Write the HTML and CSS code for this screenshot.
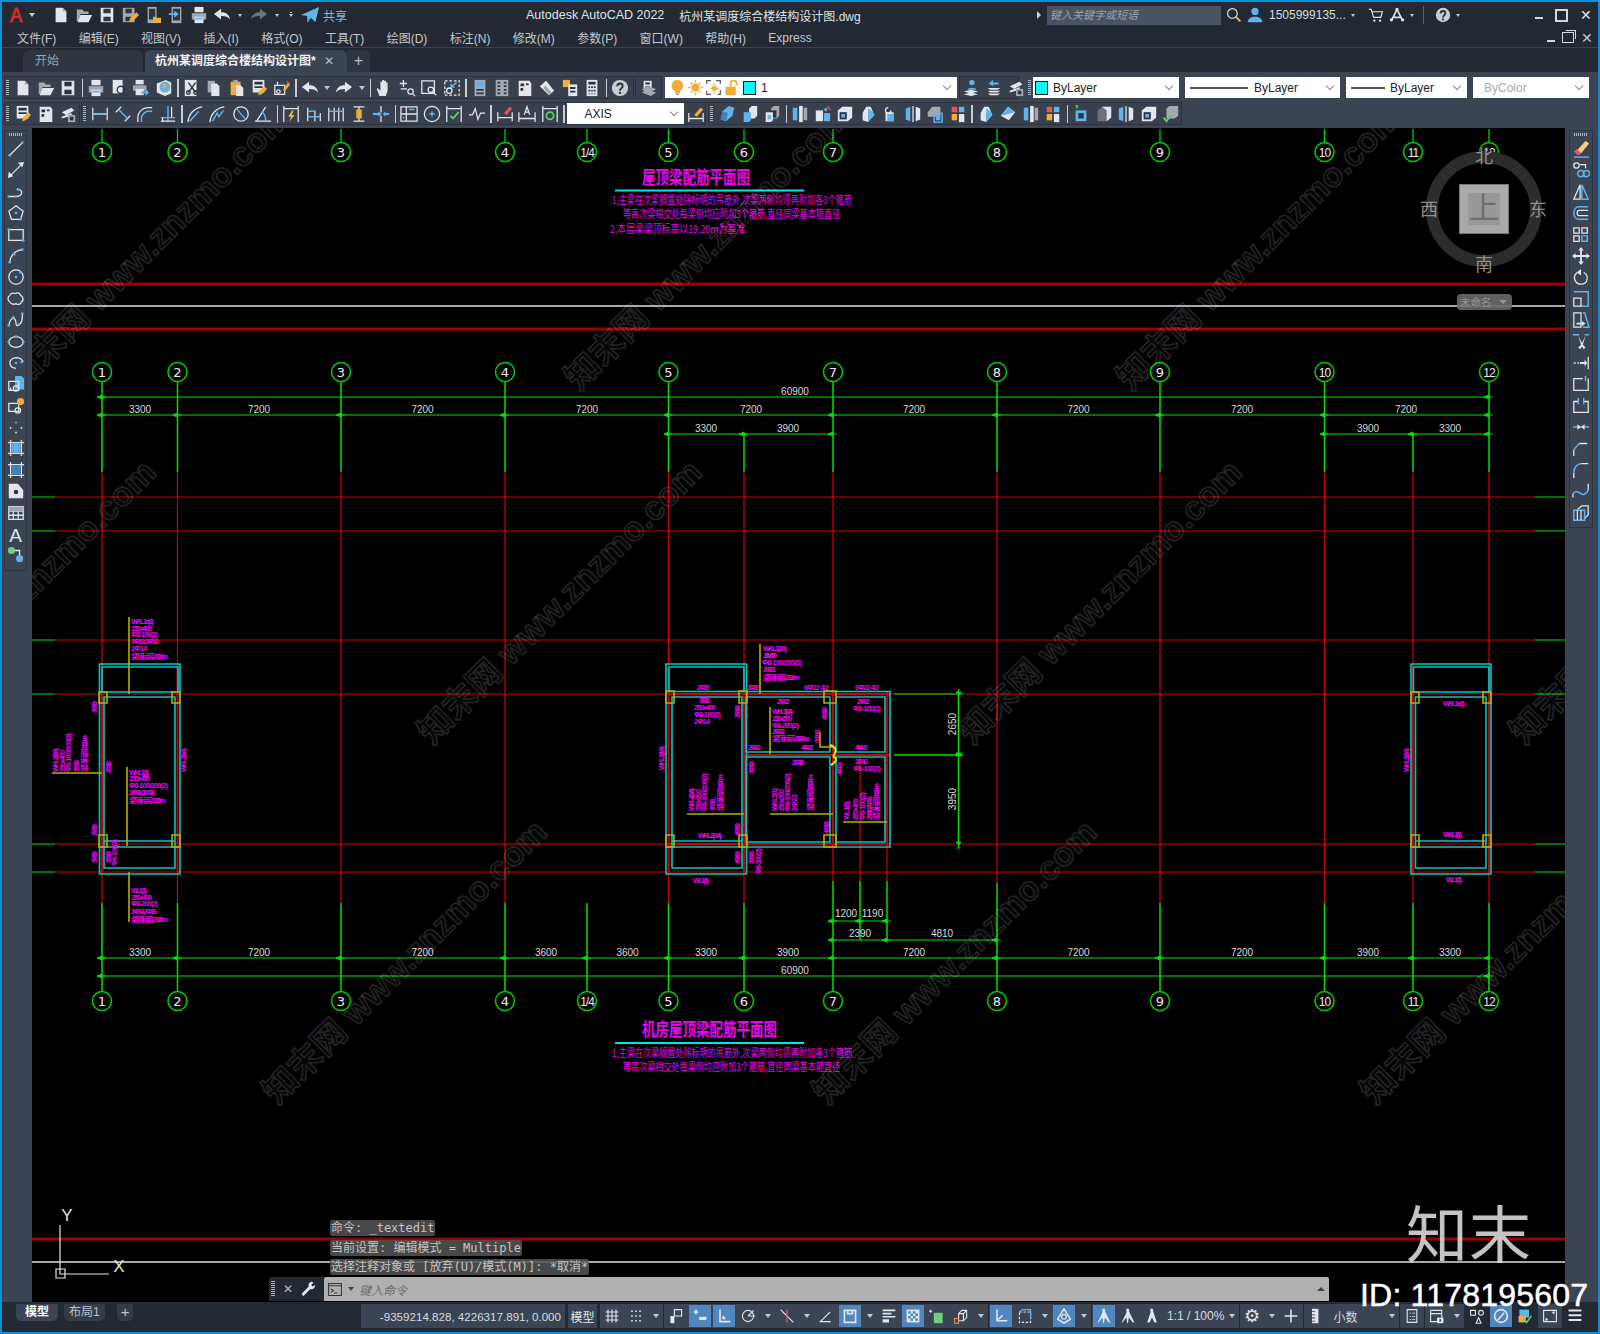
FILE: index.html
```html
<!DOCTYPE html>
<html lang="zh">
<head>
<meta charset="utf-8">
<title>Autodesk AutoCAD 2022</title>
<link rel="stylesheet" href="styles.css">
</head>
<body>
<svg class="sprite" aria-hidden="true">
<defs>
<symbol id="logo" viewBox="0 0 20 20"><path class="lg" d="M1 20L8 0h4l7 20h-4l-2-6H7l-2 6zM8 11h4l-2-6z"/></symbol>
<symbol id="new" viewBox="0 0 20 20"><path class="w" d="M4 2h8l4 4v12H4z"/><path class="g1" d="M12 2l4 4h-4z"/></symbol>
<symbol id="open" viewBox="0 0 20 20"><path class="g1" d="M2 4h6l2 2h5v3H6l-2 8H2z"/><path class="w" d="M6 10h13l-4 8H3z"/></symbol>
<symbol id="save" viewBox="0 0 20 20"><path class="w" d="M3 2h14v16H3z"/><path class="dk" d="M6 3h8v5H6zM6 12h8v5H6z"/></symbol>
<symbol id="saveas" viewBox="0 0 20 20"><path class="g1" d="M2 2h13v16H2z"/><path class="dk" d="M5 3h7v5H5zM5 12h7v5H5z"/><path class="o" d="M9 18l1-4 7-7 3 3-7 7z"/></symbol>
<symbol id="pub" viewBox="0 0 20 20"><path class="g1" d="M4 1h10v18H4z"/><path class="dk" d="M5.500 3h7v12h-7z"/><path class="o" d="M10 12h3l1 1h5v6h-9z"/></symbol>
<symbol id="mob" viewBox="0 0 20 20"><path class="g1" d="M5 1h11v18H5z"/><path class="dk" d="M6.500 3h8v13h-8z"/><path class="bl" d="M2 8h6V5l5 4-5 4v-3H2z"/></symbol>
<symbol id="print" viewBox="0 0 20 20"><path class="w" d="M5 1h10v6H5z"/><path class="g1" d="M2 8h16v7H2z"/><path class="w" d="M5 12h10v7H5z"/><path class="bl" d="M6 13h8v2H6z"/></symbol>
<symbol id="prev" viewBox="0 0 20 20"><path class="w" d="M3 1h11v15H3z"/><circle class="dkl" cx="12" cy="12" r="4"/><path class="dkl" d="M15 15l4 4"/></symbol>
<symbol id="plot" viewBox="0 0 20 20"><path class="w" d="M4 1h9v5H4z"/><path class="g1" d="M1 7h15v6H1z"/><path class="w" d="M4 11h9v7H4z"/><path class="bl" d="M10 14h5v-3l4 4-4 4v-3h-5z"/></symbol>
<symbol id="globe" viewBox="0 0 20 20"><path class="w" d="M2 5l10-4 6 3v12l-7 3-9-4z"/><circle class="bl" cx="11" cy="9" r="6"/><path class="o" d="M8 6l4-1 1 3-3 3z"/></symbol>
<symbol id="cut" viewBox="0 0 20 20"><path class="w" d="M2 1h13v18H2z"/><path class="dkl" d="M6 4l8 11M14 4L6 15"/><circle class="dkl" cx="6" cy="15" r="2"/><circle class="dkl" cx="14" cy="15" r="2"/></symbol>
<symbol id="copy" viewBox="0 0 20 20"><path class="g1" d="M3 2h8v13H3z"/><path class="w" d="M7 5h6l3 3v11H7z"/></symbol>
<symbol id="paste" viewBox="0 0 20 20"><path class="o" d="M3 3h11v15H3z"/><path class="g1" d="M6 1h5v4H6z"/><path class="w" d="M9 7h5l3 3v9H9z"/></symbol>
<symbol id="blk" viewBox="0 0 20 20"><path class="w" d="M3 1h13v14H3z"/><path class="dk" d="M5 3h9v3H5zM5 8h9v2H5z"/><path class="o" d="M9 18l1-4 6-6 3 3-6 6z"/></symbol>
<symbol id="match" viewBox="0 0 20 20"><path class="l" d="M2 7h11v10H2zM5 3v4"/><circle class="l" cx="6" cy="14" r="2"/><path class="o" d="M11 12l6-8 2 2-6 8z"/><path class="rd" d="M16 2l3 3-1 1-3-3z"/></symbol>
<symbol id="undo" viewBox="0 0 20 20"><path class="w" d="M1 9l8-6v4c6 0 9 3 10 8-2-3-5-4-10-4v4z"/></symbol>
<symbol id="redo" viewBox="0 0 20 20"><path class="w" d="M19 9l-8-6v4C5 7 2 10 1 15c2-3 5-4 10-4v4z"/></symbol>
<symbol id="redog" viewBox="0 0 20 20"><path class="g2" d="M19 9l-8-6v4C5 7 2 10 1 15c2-3 5-4 10-4v4z"/></symbol>
<symbol id="share" viewBox="0 0 20 20"><path class="bl" d="M0 10L20 1l-4 17-5-5-4 6v-8zM8 11l8-7-6 9z"/></symbol>
<symbol id="hand" viewBox="0 0 20 20"><path class="w" d="M5 19l-3-8 1-1 3 3V3h2v7V1h2v9V2h2v8V4h2v9l-2 6z"/></symbol>
<symbol id="zrt" viewBox="0 0 20 20"><path class="l" d="M6 1v8M2 5h8M3 11h7"/><circle class="l" cx="14" cy="14" r="3"/><path class="l" d="M16 16l3 3"/></symbol>
<symbol id="zwin" viewBox="0 0 20 20"><path class="l" d="M2 2h14v14H2z"/><circle class="l" cx="12" cy="12" r="3"/><path class="l" d="M14 14l4 4"/></symbol>
<symbol id="zprev" viewBox="0 0 20 20"><path class="l dash" d="M2 2h16v16H2z"/><path class="lb" d="M15 4L9 9M9 5v4h4"/><circle class="l" cx="7" cy="13" r="3"/></symbol>
<symbol id="prop" viewBox="0 0 20 20"><path class="g1" d="M4 1h12v18H4z"/><path class="bl" d="M6 3h8v6H6z"/><path class="dk" d="M6 11h8v2H6zM6 15h8v2H6z"/></symbol>
<symbol id="tool" viewBox="0 0 20 20"><path class="g1" d="M3 1h14v18H3z"/><path class="dk" d="M5 3h3v2H5zM12 3h3v2h-3zM5 7h3v2H5zM12 7h3v2h-3zM5 11h3v2H5zM12 11h3v2h-3zM5 15h3v2H5zM12 15h3v2h-3z"/></symbol>
<symbol id="sheet" viewBox="0 0 20 20"><path class="w" d="M3 2h12l2 3v14H3z"/><path class="dk" d="M5 5h4v3H5zM5 10h3v3H5zM11 5h3v2h-3z"/></symbol>
<symbol id="mark" viewBox="0 0 20 20"><path class="w" d="M2 8l7-6 9 11-6 5z"/><path class="g1" d="M8 7l7 8-3 3-6-8z"/></symbol>
<symbol id="qcalc" viewBox="0 0 20 20"><path class="o" d="M2 1h8v8H2z"/><path class="w" d="M8 6h10v13H8z"/><path class="dk" d="M10 9h6v2h-6zM10 13h6v2h-6z"/></symbol>
<symbol id="calc" viewBox="0 0 20 20"><path class="w" d="M4 1h12v18H4z"/><path class="dk" d="M6 3h8v3H6zM6 8h2v2H6zM9 8h2v2H9zM12 8h2v2h-2zM6 12h2v2H6zM9 12h2v2H9zM12 12h2v2h-2zM6 16h2v1H6zM9 16h2v1H9zM12 16h2v1h-2z"/></symbol>
<symbol id="help" viewBox="0 0 20 20"><circle class="g3" cx="10" cy="10" r="9"/><path class="dkl2" d="M7 8c0-4 6-4 6 0 0 2-3 2-3 5"/><circle class="dk" cx="10" cy="15.500" r="1.300"/></symbol>
<symbol id="lay" viewBox="0 0 20 20"><path class="w" d="M4 2h9v11H4z"/><path class="dk" d="M6 4h5v2H6zM6 8h5v2H6z"/><path class="g1" d="M2 12l6-4 10 3-6 4zM2 15l6-3 10 3-6 4z"/></symbol>
<symbol id="lay1" viewBox="0 0 20 20"><circle class="bl" cx="11" cy="4" r="3"/><path class="bl" d="M6 12c0-3 10-3 10 0z"/><path class="w" d="M2 14l8-2 8 2-8 2zM2 17l8-2 8 2-8 2z"/></symbol>
<symbol id="lay2" viewBox="0 0 20 20"><path class="bl" d="M9 1L4 5l5 3V6h6V4H9z"/><path class="w" d="M3 10h14l-3 2H6zM3 13h14l-3 2H6zM3 16h14l-3 2H6z"/></symbol>
<symbol id="lay3" viewBox="0 0 20 20"><path class="w" d="M3 8l11-5 3 3-9 5zM3 13l11-4v3l-11 3z"/><path class="g1" d="M10 11h8v8h-8z"/><path class="dk" d="M12 13h4v4h-4z"/></symbol>
<symbol id="bulb" viewBox="0 0 20 20"><circle class="o" cx="10" cy="8" r="7"/><path class="o" d="M7 13h6v4H7z"/><path class="g1" d="M8 17h4v2H8z"/></symbol>
<symbol id="sun" viewBox="0 0 20 20"><circle class="o" cx="10" cy="10" r="5"/><path class="lo" d="M10 1v3M10 16v3M1 10h3M16 10h3M4 4l2 2M14 14l2 2M16 4l-2 2M6 14l-2 2"/></symbol>
<symbol id="vp" viewBox="0 0 20 20"><path class="l3" d="M2 6V2h5M13 2h5v4M18 13v5h-3M7 18H2v-4"/><circle class="o" cx="11" cy="11" r="3"/><path class="lo" d="M11 5v2M11 15v2M6 11h2M14 11h2"/></symbol>
<symbol id="lock" viewBox="0 0 20 20"><path class="o" d="M3 9h12v10H3z"/><path class="lo2" d="M9 9V5c0-4 7-4 7 0v3"/></symbol>
<symbol id="dl" viewBox="0 0 20 20"><path class="l" d="M2 3v14M18 3v14M2 10h16"/><path class="lb" d="M2 10h16"/></symbol>
<symbol id="dal" viewBox="0 0 20 20"><path class="l" d="M2 8l6-6M12 18l6-6"/><path class="lb" d="M5 5l10 10"/></symbol>
<symbol id="darc" viewBox="0 0 20 20"><path class="l" d="M2 19v-5C2 8 7 3 13 3h5"/><path class="lb" d="M6 19v-4c0-4 4-8 8-8h4"/></symbol>
<symbol id="dord" viewBox="0 0 20 20"><path class="lb" d="M10 1v18M2 14h16"/><path class="l" d="M14 2v12M2 18h16M4 14v5"/></symbol>
<symbol id="drad" viewBox="0 0 20 20"><path class="l" d="M1 19C2 10 8 3 17 2"/><path class="lb" d="M3 18L13 7"/></symbol>
<symbol id="djog" viewBox="0 0 20 20"><path class="l" d="M1 19C2 10 8 3 17 2"/><path class="lb" d="M4 18l5-9 2 4 5-7"/></symbol>
<symbol id="ddia" viewBox="0 0 20 20"><circle class="l" cx="10" cy="10" r="8"/><path class="lb" d="M5 4l10 12"/></symbol>
<symbol id="dang" viewBox="0 0 20 20"><path class="l" d="M1 18h18M3 18L13 2"/><path class="lb" d="M9 8c3 2 4 6 4 10"/></symbol>
<symbol id="qd" viewBox="0 0 20 20"><path class="l" d="M2 1v18M18 1v18M2 4h16"/><path class="o" d="M11 6l-4 7h3l-2 6 6-8h-3l2-5z"/></symbol>
<symbol id="dbase" viewBox="0 0 20 20"><path class="l" d="M3 3v15M11 6v12M17 9v9"/><path class="lb" d="M3 7h8M3 13h14"/></symbol>
<symbol id="dcont" viewBox="0 0 20 20"><path class="l" d="M2 3v15M8 3v15M13 3v15M18 3v15"/><path class="lb" d="M2 7h16"/></symbol>
<symbol id="dsp" viewBox="0 0 20 20"><path class="l" d="M4 2h12M4 18h12M10 2v16"/><path class="o" d="M7 5h6v10H7z"/></symbol>
<symbol id="dbr" viewBox="0 0 20 20"><path class="l" d="M10 1v7M10 12v7"/><path class="bl" d="M1 9h6v-2l4 3-4 3v-2H1zM19 9h-4v-2l-3 3 3 3v-2h4z"/></symbol>
<symbol id="tol" viewBox="0 0 20 20"><path class="l" d="M1 2h18v16H1zM7 2v16M1 10h18"/><path class="lb" d="M10 5h6M3 14h2"/></symbol>
<symbol id="cen" viewBox="0 0 20 20"><circle class="l" cx="10" cy="10" r="8.500"/><path class="lb" d="M10 7v6M7 10h6"/></symbol>
<symbol id="insp" viewBox="0 0 20 20"><path class="l" d="M2 1v18M18 1v18M2 4h16"/><path class="gk" d="M6 12l3 3 6-7"/></symbol>
<symbol id="jogl" viewBox="0 0 20 20"><path class="l" d="M1 11h4l3-7 3 12 3-7h5"/></symbol>
<symbol id="dedit" viewBox="0 0 20 20"><path class="l" d="M2 8v10M18 8v10M2 14h16"/><path class="rd" d="M9 9l6-7 3 2-6 7z"/></symbol>
<symbol id="dtxt" viewBox="0 0 20 20"><path class="l" d="M1 8v11M19 8v11M1 15h18"/><path class="l" d="M7 11l3-9 3 9M8 8h4"/></symbol>
<symbol id="dupd" viewBox="0 0 20 20"><path class="l" d="M2 1v18M18 1v18M2 4h16"/><circle class="gk" cx="10" cy="12" r="4"/></symbol>
<symbol id="dst" viewBox="0 0 20 20"><path class="l" d="M2 9v10M18 9v10M2 15h16"/><path class="o" d="M8 11l7-8 3 2-7 8z"/></symbol>
<symbol id="sw1" viewBox="0 0 20 20"><path class="bl" d="M3 16l2-9 7-6 6 2-2 9-7 6z"/><path class="bl2" d="M3 16l2-9 6 2-2 9z"/></symbol>
<symbol id="sw2" viewBox="0 0 20 20"><path class="w" d="M9 4l3-3h6v11l-3 3H9z"/><path class="bl" d="M3 8h8v9l-2 2H3z"/></symbol>
<symbol id="sw3" viewBox="0 0 20 20"><path class="g1" d="M9 4l3-3h6v11l-3 3H9z"/><path class="dk" d="M8 6h7v8H8z"/><path class="w" d="M3 8h8v9l-2 2H3z"/><path class="bl" d="M5 11h4v5H5z"/></symbol>
<symbol id="sw4" viewBox="0 0 20 20"><path class="bl" d="M2 3h5v14H2z"/><path class="w" d="M9 1h4v18H9z"/><path class="g1" d="M14 3h4v14h-4z"/></symbol>
<symbol id="sw5" viewBox="0 0 20 20"><path class="w" d="M5 5l5-3h7v11l-4 3H5z"/><path class="dk" d="M7 7h7v7H7z"/><path class="bl" d="M1 10h4V7l4 4-4 4v-2H1z"/></symbol>
<symbol id="sw6" viewBox="0 0 20 20"><path class="g1" d="M2 8l5-6h9v11H2z"/><path class="lb" d="M9 9h9v10H9z"/><path class="bl" d="M11 11h5v6h-5z"/></symbol>
<symbol id="sw7" viewBox="0 0 20 20"><path class="rd" d="M3 2h6v6H3z"/><path class="bl" d="M11 2h6v6h-6z"/><path class="o" d="M3 10h6v7H3z"/><path class="w" d="M11 10h6v9h-6z"/></symbol>
<symbol id="sw8" viewBox="0 0 20 20"><path class="w" d="M4 9l4-7h5l4 9-7 8-6-2z"/><path class="bl" d="M10 4c5 2 7 7 7 7l-7 8z"/></symbol>
<symbol id="sw9" viewBox="0 0 20 20"><path class="w" d="M2 12l8-10 8 6-7 9z"/><path class="bl" d="M2 12l8-10 8 6-8 2z"/></symbol>
<symbol id="sw10" viewBox="0 0 20 20"><path class="gk2" d="M4 1h3M5.500 0v4"/><path class="bl" d="M4 6h12v12H4z"/><path class="dk" d="M7 9h6v6H7z"/></symbol>
<symbol id="sw11" viewBox="0 0 20 20"><path class="g2" d="M3 6l5-4h10v12l-5 4H3z"/><path class="w" d="M8 2h10v12l-5 4V6z"/></symbol>
<symbol id="sw12" viewBox="0 0 20 20"><path class="bl" d="M2 4l5-2v16l-5-2z"/><path class="w" d="M13 2l5 2v12l-5 2z"/><path class="l" d="M10 1v18"/></symbol>
<symbol id="sw13" viewBox="0 0 20 20"><path class="w" d="M2 6l5-4h11v12l-5 4H2z"/><path class="dk" d="M4 8h8v8H4z"/><path class="bl" d="M6 10h4v4H6z"/></symbol>
<symbol id="sw14" viewBox="0 0 20 20"><path class="g1" d="M5 4l3-3h10v11l-4 3H5z"/><path class="gk" d="M2 14l3 4 5-7"/></symbol>
<symbol id="sw15" viewBox="0 0 20 20"><path class="w" d="M2 6h8v12H2z"/><path class="lb" d="M13 3v4M11 5h4"/><path class="bl" d="M11 9h7v9h-7z"/><path class="rd" d="M15 1l4 4-1 1-4-4z"/></symbol>
<symbol id="sw16" viewBox="0 0 20 20"><path class="l" d="M8 3a3 3 0 1 0 3 3"/><path class="w" d="M5 8h9v10H5z"/><path class="bl" d="M7 10h7v8H7z"/></symbol>
<symbol id="draw-line" viewBox="0 0 20 20"><path class="l" d="M3 17L17 3"/><circle class="bl" cx="3" cy="17" r="1.500"/><circle class="bl" cx="17" cy="3" r="1.500"/></symbol>
<symbol id="draw-x" viewBox="0 0 20 20"><path class="l" d="M4 16L16 4"/><path class="w" d="M1 19l1-7 5 5zM19 1l-7 1 5 5z"/></symbol>
<symbol id="draw-p" viewBox="0 0 20 20"><path class="l" d="M2 15h8c8 0 8-8 2-8"/><circle class="bl" cx="2" cy="15" r="1.500"/><circle class="bl" cx="10" cy="15" r="1.500"/><circle class="bl" cx="12" cy="7" r="1.500"/></symbol>
<symbol id="draw-pg" viewBox="0 0 20 20"><path class="l" d="M10 2l8 6-3 9H5L2 8z"/><circle class="bl" cx="10" cy="10" r="1.500"/><circle class="bl" cx="15" cy="17" r="1.500"/></symbol>
<symbol id="draw-r" viewBox="0 0 20 20"><path class="l" d="M2 4h16v12H2z"/><circle class="bl" cx="2" cy="4" r="1.500"/><circle class="bl" cx="18" cy="16" r="1.500"/></symbol>
<symbol id="draw-a" viewBox="0 0 20 20"><path class="l" d="M3 17C4 9 9 4 17 3"/><circle class="bl" cx="3" cy="17" r="1.500"/><circle class="bl" cx="8" cy="8" r="1.500"/><circle class="bl" cx="17" cy="3" r="1.500"/></symbol>
<symbol id="draw-c" viewBox="0 0 20 20"><circle class="l" cx="10" cy="10" r="8"/><circle class="bl" cx="10" cy="10" r="1.500"/><circle class="bl" cx="15" cy="5" r="1.500"/></symbol>
<symbol id="draw-cl" viewBox="0 0 20 20"><path class="l" d="M3 6c1-3 5-3 6-2 3-2 6 0 6 2 3 1 4 6 1 7 0 3-5 4-6 2-3 2-6 0-7-2-2-1-3-5 0-7z"/></symbol>
<symbol id="draw-s" viewBox="0 0 20 20"><path class="l" d="M2 16c2-10 8-10 8-2 0 5 8 2 7-11"/><circle class="bl" cx="2" cy="16" r="1.500"/><circle class="bl" cx="7" cy="7" r="1.500"/><circle class="bl" cx="13" cy="15" r="1.500"/><circle class="bl" cx="17" cy="3" r="1.500"/></symbol>
<symbol id="draw-e" viewBox="0 0 20 20"><ellipse class="l" cx="10" cy="10" rx="8" ry="6"/><circle class="bl" cx="10" cy="4" r="1.500"/><circle class="bl" cx="18" cy="10" r="1.500"/><circle class="bl" cx="2" cy="10" r="1.500"/></symbol>
<symbol id="draw-ea" viewBox="0 0 20 20"><path class="l" d="M10 16C1 15 1 5 10 4c4 0 7 2 8 5"/><circle class="bl" cx="10" cy="10" r="1.500"/><circle class="bl" cx="16" cy="9" r="1.500"/></symbol>
<symbol id="draw-i" viewBox="0 0 20 20"><path class="bl" d="M9 1h7l3 3v12H9z"/><path class="l" d="M2 7h11v10H2zM4 17v-3"/><circle class="l" cx="10" cy="15" r="3"/></symbol>
<symbol id="draw-b" viewBox="0 0 20 20"><path class="l" d="M2 7h11v9H2z"/><circle class="o" cx="15" cy="5" r="4"/><circle class="l" cx="12" cy="15" r="3"/></symbol>
<symbol id="draw-pt" viewBox="0 0 20 20"><circle class="w" cx="4" cy="11" r="1"/><circle class="w" cx="16" cy="11" r="1"/><circle class="bl" cx="10" cy="5" r="1.200"/><circle class="w" cx="10" cy="16" r="1"/></symbol>
<symbol id="draw-h" viewBox="0 0 20 20"><path class="l" d="M1 4h18M1 16h18M4 1v18M16 1v18"/><path class="bl" d="M5 5h10v10H5z"/></symbol>
<symbol id="draw-g" viewBox="0 0 20 20"><path class="l" d="M1 4h18M1 16h18M4 1v18M16 1v18"/><path class="bl2" d="M5 5h10v10H5z"/></symbol>
<symbol id="draw-rg" viewBox="0 0 20 20"><path class="w" d="M2 2h10l6 7v9H2z"/><circle class="dk" cx="10" cy="11" r="2.500"/></symbol>
<symbol id="draw-t" viewBox="0 0 20 20"><path class="l" d="M2 3h16v14H2zM2 8h16M2 12.500h16M7 8v9M12.500 8v9"/><path class="g1" d="M2 3h16v5H2z"/></symbol>
<symbol id="draw-add" viewBox="0 0 20 20"><circle class="gn" cx="5" cy="5" r="4"/><circle class="bl" cx="14" cy="14" r="4"/><path class="l" d="M9 5h5v5"/></symbol>
<symbol id="m-er" viewBox="0 0 20 20"><path class="o2" d="M6 11L15 1l4 3-9 11z"/><path class="rd" d="M2 13l4-3 4 5-3 2z"/><path class="lb" d="M2 19h17"/></symbol>
<symbol id="m-co" viewBox="0 0 20 20"><circle class="l" cx="5" cy="5" r="3"/><path class="l" d="M9 4h6v4"/><circle class="lb" cx="10" cy="14" r="3.500"/><circle class="lb" cx="16" cy="14" r="3.500"/></symbol>
<symbol id="m-mi" viewBox="0 0 20 20"><path class="l" d="M9 2L2 18h7z"/><path class="lb" d="M11 2l7 16h-7z"/></symbol>
<symbol id="m-of" viewBox="0 0 20 20"><path class="lb" d="M18 3H8c-8 0-8 14 0 14h10"/><path class="l" d="M18 7H8c-3 0-3 6 0 6h10"/></symbol>
<symbol id="m-ar" viewBox="0 0 20 20"><path class="l" d="M2 2h6v6H2zM11 2h6v6h-6zM2 11h6v6H2z"/><path class="lb" d="M11 11h6v6h-6z"/></symbol>
<symbol id="m-mv" viewBox="0 0 20 20"><path class="w" d="M10 0l3 4h-2v5h5V7l4 3-4 3v-2h-5v5h2l-3 4-3-4h2v-5H4v2l-4-3 4-3v2h5V4H7z"/></symbol>
<symbol id="m-ro" viewBox="0 0 20 20"><path class="l" d="M6 5C0 9 3 18 10 18c8 0 9-10 3-13"/><path class="w" d="M10 1l-5 4 5 3z"/></symbol>
<symbol id="m-sc" viewBox="0 0 20 20"><path class="lb" d="M2 2h16v16H9"/><path class="l" d="M2 9h8v9H2z"/></symbol>
<symbol id="m-st" viewBox="0 0 20 20"><path class="l" d="M2 2h8v16H2z"/><path class="lb" d="M12 2h2l5 16H12"/><path class="w" d="M5 13h6v-2l4 3-4 3v-2H5z"/></symbol>
<symbol id="m-tr" viewBox="0 0 20 20"><path class="lb" d="M1 2h7M14 2h5"/><path class="w" d="M7 3l4 8 4-8-3 10 3 3-2 2-2-3-2 3-2-2 3-3z"/></symbol>
<symbol id="m-ex" viewBox="0 0 20 20"><path class="l" d="M18 3v14M2 10h2M6 10h2"/><path class="w" d="M9 9h5V6l3 4-3 4v-3H9z"/></symbol>
<symbol id="m-br" viewBox="0 0 20 20"><path class="l" d="M12 4H2v13h16V4"/><path class="lb" d="M15 1v6"/></symbol>
<symbol id="m-bk" viewBox="0 0 20 20"><path class="l" d="M7 5H2v12h16V5h-5"/><path class="lb" d="M7 1v7M13 1v7"/></symbol>
<symbol id="m-jo" viewBox="0 0 20 20"><path class="lb" d="M1 10h18"/><path class="w" d="M6 7l4 3-4 3zM14 7l-4 3 4 3z"/></symbol>
<symbol id="m-ch" viewBox="0 0 20 20"><path class="l" d="M2 19v-7M8 5h9"/><path class="lb" d="M2 12l6-7"/></symbol>
<symbol id="m-fi" viewBox="0 0 20 20"><path class="l" d="M2 19v-6M10 3h8"/><path class="lb" d="M2 13c0-6 4-10 8-10"/></symbol>
<symbol id="m-bl" viewBox="0 0 20 20"><path class="l" d="M1 17v-4M18 2v7"/><path class="lb" d="M1 13c3-4 6-2 9 0s6 0 8-4"/></symbol>
<symbol id="m-xp" viewBox="0 0 20 20"><path class="l" d="M6 6l5-4h7v10l-4 4"/><path class="lb" d="M2 7h12v11H2z"/><path class="l" d="M6 7v11M10 7v11"/></symbol>
<symbol id="st-grid" viewBox="0 0 20 20"><path class="l" d="M5 2v16M10 2v16M15 2v16M2 5h16M2 10h16M2 15h16"/></symbol>
<symbol id="st-snap" viewBox="0 0 20 20"><path class="dots" d="M4 4h2M9 4h2M14 4h2M4 10h2M9 10h2M14 10h2M4 16h2M9 16h2M14 16h2"/></symbol>
<symbol id="st-inf" viewBox="0 0 20 20"><path class="l" d="M8 2h9v8H8z"/><path class="w" d="M3 10h5v9H3z"/></symbol>
<symbol id="st-dyn" viewBox="0 0 20 20"><path class="l2" d="M5 2v6M2 5h6"/><path class="w" d="M9 11h9v4H9z"/></symbol>
<symbol id="st-ortho" viewBox="0 0 20 20"><path class="l2" d="M5 2v15h13"/><path class="l2" d="M9 10v3h3"/></symbol>
<symbol id="st-pol" viewBox="0 0 20 20"><circle class="l" cx="10" cy="10" r="7"/><path class="l" d="M10 10h9M10 10l7-7"/></symbol>
<symbol id="st-iso" viewBox="0 0 20 20"><path class="l" d="M2 2l16 16"/><path class="rd2" d="M10 2v16"/></symbol>
<symbol id="st-os" viewBox="0 0 20 20"><path class="l" d="M2 17h14M3 17L15 5"/></symbol>
<symbol id="st-otrack" viewBox="0 0 20 20"><path class="l2" d="M3 3h14v15H3zM7 3v4h6V3"/></symbol>
<symbol id="st-lw" viewBox="0 0 20 20"><path class="w" d="M2 2h16v2H2zM2 6h11v2H2zM2 10h16v2H2zM2 14h8v4H2z"/></symbol>
<symbol id="st-tp" viewBox="0 0 20 20"><path class="w" d="M2 2h16v16H2z"/><path class="bl2" d="M4 4h3v3H4zM10 4h3v3h-3zM7 7h3v3H7zM13 7h3v3h-3zM4 10h3v3H4zM10 10h3v3h-3zM7 13h3v3H7zM13 13h3v3h-3z"/></symbol>
<symbol id="st-qp" viewBox="0 0 20 20"><path class="l" d="M2 2v4M0 4h4"/><path class="gn" d="M6 6h11v13H6z"/></symbol>
<symbol id="st-3d" viewBox="0 0 20 20"><path class="l" d="M7 7l4-4h6v9l-4 4H7zM7 7h6v9M13 7l4-4"/><path class="ol" d="M2 13h5v6H2z"/></symbol>
<symbol id="st-ucs" viewBox="0 0 20 20"><path class="l2" d="M5 2v14h13M5 16l7-7"/></symbol>
<symbol id="st-cube" viewBox="0 0 20 20"><path class="l dash" d="M3 5h14v13H3z"/><path class="lb" d="M3 5l4-3h10v11"/></symbol>
<symbol id="st-gizmo" viewBox="0 0 20 20"><path class="l2" d="M10 1l8 13-8 5-8-5z"/><circle class="l" cx="10" cy="11" r="3"/></symbol>
<symbol id="st-ann" viewBox="0 0 20 20"><path class="w" d="M8 1h3l1 5 6 12h-2l-5-6-1 7h-1l-1-7-5 6H2L8 6z"/></symbol>
<symbol id="st-ann2" viewBox="0 0 20 20"><path class="w" d="M8 1h3l1 5 4 12h-3l-3-6-3 6H4L8 6z"/></symbol>
<symbol id="st-plus" viewBox="0 0 20 20"><path class="l2" d="M10 2v16M2 10h16"/></symbol>
<symbol id="st-ruler" viewBox="0 0 20 20"><path class="w" d="M5 1h8v18H5z"/><path class="dk" d="M5 4h4v1H5zM5 8h4v1H5zM5 12h4v1H5zM5 16h4v1H5z"/></symbol>
<symbol id="st-qview" viewBox="0 0 20 20"><path class="l" d="M4 2h12v16H4z"/><path class="w" d="M7 6h2v1H7zM10 6h4v1h-4zM7 10h2v1H7zM10 10h4v1h-4zM7 14h2v1H7zM10 14h4v1h-4z"/></symbol>
<symbol id="st-ui" viewBox="0 0 20 20"><path class="l" d="M2 3h14v12M2 3v14h8M2 7h14"/><path class="w" d="M10 12h8v7h-8z"/><path class="dk" d="M13 14h2v3h-2z"/></symbol>
<symbol id="st-iso2" viewBox="0 0 20 20"><path class="l" d="M2 3h6v6H2zM9 19l3-7 3 7z"/><circle class="l" cx="15" cy="6" r="3"/></symbol>
<symbol id="st-hw" viewBox="0 0 20 20"><circle class="l2" cx="10" cy="10" r="8"/><path class="l2" d="M6 15L14 6"/></symbol>
<symbol id="st-cl" viewBox="0 0 20 20"><path class="bl" d="M3 2h12v10H3z"/><path class="o" d="M2 10h9v8H2z"/><path class="gk" d="M9 14l3 4 6-8"/></symbol>
<symbol id="st-full" viewBox="0 0 20 20"><path class="l" d="M2 3h16v14H2z"/><path class="w" d="M4 16l4-1-3-3zM16 4l-4 1 3 3z"/></symbol>
<symbol id="st-menu" viewBox="0 0 20 20"><path class="w" d="M2 3h16v2.500H2zM2 9h16v2.500H2zM2 15h16v2.500H2z"/></symbol>
<symbol id="st-term" viewBox="0 0 20 20"><path class="cmdk" d="M2 3h16v15H2zM2 6h16M5 10l3 2-3 2M9 15h4"/></symbol>
<symbol id="wrench" viewBox="0 0 20 20"><path class="w" d="M14 1c-3 1-4 4-3 6L2 16l2 3 9-9c3 1 6-1 6-5l-3 2-2-2 3-3z"/></symbol>
<symbol id="zoomg" viewBox="0 0 20 20"><circle class="l" cx="8" cy="8" r="6"/><path class="o3" d="M12 12l6 6"/></symbol>
<symbol id="user" viewBox="0 0 20 20"><circle class="bl" cx="10" cy="5.500" r="4.500"/><path class="bl" d="M1 19c0-9 18-9 18 0z"/></symbol>
<symbol id="cart" viewBox="0 0 20 20"><path class="l" d="M1 3h3l3 10h9l2-7H5"/><circle class="w" cx="8" cy="17" r="1.500"/><circle class="w" cx="15" cy="17" r="1.500"/></symbol>
<symbol id="autod" viewBox="0 0 20 20"><path class="l2" d="M10 3L3 17M10 3l7 14M5 13h10"/><circle class="w" cx="10" cy="3" r="2"/><circle class="w" cx="3" cy="16" r="2"/><circle class="w" cx="17" cy="16" r="2"/></symbol>
<marker id="tk" markerWidth="10" markerHeight="6" refX="5" refY="3" markerUnits="userSpaceOnUse"><path class="tick" d="M0 3l5-2v4zM5 3h4"/></marker>
</defs>
</svg>

<div class="app">
  <header class="titlebar">
    <svg class="logo"><use href="#logo"/></svg><span class="caret"></span>
    <div class="qat">
      <svg class="ic"><use href="#new"/></svg>
      <svg class="ic"><use href="#open"/></svg>
      <svg class="ic"><use href="#save"/></svg>
      <svg class="ic"><use href="#saveas"/></svg>
      <svg class="ic"><use href="#pub"/></svg>
      <svg class="ic"><use href="#mob"/></svg>
      <svg class="ic"><use href="#print"/></svg>
      <svg class="ic"><use href="#undo"/></svg><span class="caret slim"></span>
      <svg class="ic"><use href="#redog"/></svg><span class="caret slim"></span>
      <span class="caret slim bar"></span>
      <svg class="ic"><use href="#share"/></svg><span class="share">共享</span>
    </div>
    <div class="doctitle"><span class="dtapp">Autodesk AutoCAD 2022</span><span class="dtfile">杭州某调度综合楼结构设计图.dwg</span></div>
    <div class="tright">
      <span class="rarrow"></span>
      <div class="search">键入关键字或短语</div>
      <svg class="ic2"><use href="#zoomg"/></svg>
      <svg class="ic2"><use href="#user"/></svg>
      <span class="uname">1505999135...</span><span class="caret slim"></span>
      <svg class="ic2 cart"><use href="#cart"/></svg>
      <svg class="ic2"><use href="#autod"/></svg><span class="caret slim"></span>
      <span class="tdiv"></span>
      <svg class="ic2"><use href="#help"/></svg><span class="caret slim"></span>
      <div class="winbtns"><span class="wmin"></span><span class="wmax"></span><span class="wclose">✕</span></div>
    </div>
  </header>

  <nav class="menubar">
    <span>文件(F)</span><span>编辑(E)</span><span>视图(V)</span><span>插入(I)</span><span>格式(O)</span><span>工具(T)</span><span>绘图(D)</span><span>标注(N)</span><span>修改(M)</span><span>参数(P)</span><span>窗口(W)</span><span>帮助(H)</span><span>Express</span>
    <div class="subwin"><span class="wmin"></span><span class="wrest"></span><span class="wclose">✕</span></div>
  </nav>

  <div class="tabbar">
    <div class="tab">开始</div>
    <div class="tab active">杭州某调度综合楼结构设计图*<span class="tabx">✕</span></div>
    <div class="tabadd">+</div>
  </div>

  <div class="toolrows">
    <div class="toolrow">
      <div class="panel p1">
        <span class="grip"></span>
        <svg class="ic"><use href="#new"/></svg><svg class="ic"><use href="#open"/></svg><svg class="ic"><use href="#save"/></svg><span class="sep"></span>
        <svg class="ic"><use href="#print"/></svg><svg class="ic"><use href="#prev"/></svg><svg class="ic"><use href="#plot"/></svg><svg class="ic"><use href="#globe"/></svg><span class="sep"></span>
        <svg class="ic"><use href="#cut"/></svg><svg class="ic"><use href="#copy"/></svg><svg class="ic"><use href="#paste"/></svg><svg class="ic"><use href="#blk"/></svg><svg class="ic"><use href="#match"/></svg><span class="sep"></span>
        <svg class="ic"><use href="#undo"/></svg><span class="caret mini"></span><svg class="ic"><use href="#redo"/></svg><span class="caret mini"></span><span class="sep"></span>
        <svg class="ic"><use href="#hand"/></svg><svg class="ic"><use href="#zrt"/></svg><svg class="ic"><use href="#zwin"/></svg><svg class="ic"><use href="#zprev"/></svg><span class="sep"></span>
        <svg class="ic"><use href="#prop"/></svg><svg class="ic"><use href="#tool"/></svg><svg class="ic"><use href="#sheet"/></svg><svg class="ic"><use href="#mark"/></svg><svg class="ic"><use href="#qcalc"/></svg><svg class="ic"><use href="#calc"/></svg><span class="sep"></span>
        <svg class="ic"><use href="#help"/></svg>
      </div>
      <div class="panel p2"><svg class="ic"><use href="#lay"/></svg></div>
      <div class="combo layerbox">
        <svg class="lic"><use href="#bulb"/></svg><svg class="lic"><use href="#sun"/></svg><svg class="lic"><use href="#vp"/></svg><svg class="lic"><use href="#lock"/></svg><span class="swatch"></span><span class="lname">1</span><span class="chev"></span>
      </div>
      <div class="panel p3"><svg class="ic"><use href="#lay1"/></svg><svg class="ic"><use href="#lay2"/></svg><svg class="ic"><use href="#lay3"/></svg></div>
      <span class="grip g2"></span>
      <div class="combo colorbox"><span class="swatch"></span><span class="lname">ByLayer</span><span class="chev"></span></div>
      <div class="combo linebox"><span class="ln"></span><span class="lname">ByLayer</span><span class="chev"></span></div>
      <div class="combo weightbox"><span class="ln short"></span><span class="lname">ByLayer</span><span class="chev"></span></div>
      <div class="combo plotbox"><span class="lname dim">ByColor</span><span class="chev"></span></div>
    </div>
    <div class="toolrow">
      <div class="panel q1"><span class="grip"></span>
        <svg class="ic"><use href="#blk"/></svg><svg class="ic"><use href="#sheet"/></svg><svg class="ic"><use href="#lay3"/></svg>
      </div>
      <div class="panel q2"><span class="grip"></span>
        <svg class="ic"><use href="#dl"/></svg><svg class="ic"><use href="#dal"/></svg><svg class="ic"><use href="#darc"/></svg><svg class="ic"><use href="#dord"/></svg><span class="sep"></span>
        <svg class="ic"><use href="#drad"/></svg><svg class="ic"><use href="#djog"/></svg><svg class="ic"><use href="#ddia"/></svg><svg class="ic"><use href="#dang"/></svg><span class="sep"></span>
        <svg class="ic"><use href="#qd"/></svg><svg class="ic"><use href="#dbase"/></svg><svg class="ic"><use href="#dcont"/></svg><svg class="ic"><use href="#dsp"/></svg><svg class="ic"><use href="#dbr"/></svg><span class="sep"></span>
        <svg class="ic"><use href="#tol"/></svg><svg class="ic"><use href="#cen"/></svg><svg class="ic"><use href="#insp"/></svg><svg class="ic"><use href="#jogl"/></svg><span class="sep"></span>
        <svg class="ic"><use href="#dedit"/></svg><svg class="ic"><use href="#dtxt"/></svg><svg class="ic"><use href="#dupd"/></svg><span class="sep"></span>
        <div class="combo axisbox"><span class="lname">AXIS</span><span class="chev"></span></div>
        <svg class="ic"><use href="#dst"/></svg>
      </div>
      <div class="panel q3"><span class="grip"></span>
        <svg class="ic"><use href="#sw1"/></svg><svg class="ic"><use href="#sw2"/></svg><svg class="ic"><use href="#sw3"/></svg><span class="sep"></span>
        <svg class="ic"><use href="#sw4"/></svg><svg class="ic"><use href="#sw15"/></svg><svg class="ic"><use href="#sw13"/></svg><svg class="ic"><use href="#sw8"/></svg><svg class="ic"><use href="#sw16"/></svg><svg class="ic"><use href="#sw12"/></svg><svg class="ic"><use href="#sw6"/></svg><svg class="ic"><use href="#sw7"/></svg><span class="sep"></span>
        <svg class="ic"><use href="#sw8"/></svg><svg class="ic"><use href="#sw9"/></svg><svg class="ic"><use href="#sw4"/></svg><svg class="ic"><use href="#sw7"/></svg><span class="sep"></span>
        <svg class="ic"><use href="#sw10"/></svg><svg class="ic"><use href="#sw11"/></svg><svg class="ic"><use href="#sw12"/></svg><svg class="ic"><use href="#sw13"/></svg><svg class="ic"><use href="#sw14"/></svg>
      </div>
    </div>
  </div>

  <main class="workspace">
    <aside class="side left">
      <div class="vbar">
        <span class="vgrip"></span>
        <svg class="ic v"><use href="#draw-line"/></svg><svg class="ic v"><use href="#draw-x"/></svg><svg class="ic v"><use href="#draw-p"/></svg><svg class="ic v"><use href="#draw-pg"/></svg><svg class="ic v"><use href="#draw-r"/></svg><svg class="ic v"><use href="#draw-a"/></svg><svg class="ic v"><use href="#draw-c"/></svg><svg class="ic v"><use href="#draw-cl"/></svg><svg class="ic v"><use href="#draw-s"/></svg><svg class="ic v"><use href="#draw-e"/></svg><svg class="ic v"><use href="#draw-ea"/></svg><svg class="ic v"><use href="#draw-i"/></svg><svg class="ic v"><use href="#draw-b"/></svg><svg class="ic v"><use href="#draw-pt"/></svg><svg class="ic v"><use href="#draw-h"/></svg><svg class="ic v"><use href="#draw-g"/></svg><svg class="ic v"><use href="#draw-rg"/></svg><svg class="ic v"><use href="#draw-t"/></svg>
        <span class="vtext">A</span>
        <svg class="ic v"><use href="#draw-add"/></svg>
      </div>
    </aside>

    <section class="canvas">
      <svg class="drawing" viewBox="32 128 1533 1174" width="1533" height="1174">
        <!-- horizontal reference lines -->
        <path class="thickred" d="M32 284H1565M32 329H1565M32 1239H1565"/>
        <path class="thinwhite" d="M32 306H1565M32 1262H1565"/>
        <path class="red" d="M55 497H1535M55 531H1535M55 640H1535M55 694H1535M55 844H1535M55 872H1535"/>
        <path class="green" d="M32 497H55M1535 497H1565M32 531H55M1535 531H1565M32 640H55M1535 640H1565M32 694H55M1535 694H1565M32 844H55M1535 844H1565M32 872H55M1535 872H1565"/>

        <!-- axis lines -->
        <path class="red" d="M102 472V903M177.500 472V903M341 472V903M505 472V903M668.500 472V903M744 472V903M833 472V881M997 472V883M1160 472V903M1324.500 472V903M1413 472V903M1489 472V903M860 755V881M887 755V881"/>
        <path class="redb" d="M102 664V874M177.500 664V874M668.500 664V874M744 664V874M833 691V847M887 691V847M1413 664V874M1489 664V874M668 694H890M744 755H890M668 844H890"/>
        <path class="green" d="M102 129V142M177.500 129V142M341 129V142M505 129V142M587 129V142M668.500 129V142M744 129V142M833 129V142M997 129V142M1160 129V142M1324.500 129V142M1413 129V142M1489 129V142"/>
        <path class="greenb" d="M102 381V472M177.500 381V472M341 381V472M505 381V472M668.500 381V472M744 434V472M833 381V472M997 381V472M1160 381V472M1324.500 381V472M1413 434V472M1489 381V472M102 903V991M177.500 903V991M341 903V991M505 903V991M587 903V991M668.500 903V991M744 903V991M833 881V991M997 883V991M1160 903V991M1324.500 903V991M1413 903V991M1489 903V991M860 881V940M887 881V940M894 755H963"/>
        <path class="green" d="M894 694H963"/>

        <!-- dimension lines -->
        <polyline class="dim" points="102,397 1489,397"/>
        <polyline class="dim" points="102,415 177.500,415 341,415 505,415 668.500,415 833,415 997,415 1160,415 1324.500,415 1489,415"/>
        <polyline class="dim" points="668.500,434 744,434 833,434"/>
        <polyline class="dim" points="1324.500,434 1413,434 1489,434"/>
        <polyline class="dim" points="102,958 177.500,958 341,958 505,958 587,958 668.500,958 744,958 833,958 997,958 1160,958 1324.500,958 1413,958 1489,958"/>
        <polyline class="dim" points="102,976 1489,976"/>
        <polyline class="dim" points="833,921 860,921 887,921"/>
        <polyline class="dim" points="833,940 887,940 997,940"/>
        <path class="greenb" d="M958.500 689V849"/>
        <path class="tick" d="M956 692h5l-2 3zM956 753h5v3h-5zM956 842h5l-2 3z"/>

        <!-- core block -->
        <g class="cyan">
          <path d="M666 664H746.500V874H666zM669 667H744V691M669 667V691M666 691.500H890V847H666M672 841V868H742V697H672V841M672 841H742M746 697H830V752H746zM836 697H885V752H836zM746 757H830V842H746zM836 757H885V842H836z"/>
        </g>
        <g class="yellow">
          <path d="M666 691h8v12h-8zM739 691h8v12h-8zM824 691h12v12h-12zM666 835h8v12h-8zM739 835h8v12h-8zM824 835h12v12h-12z"/>
        </g>
        <path class="yelline" d="M760 644V694M770 707V754M687 814H744M770 814H833M843 822H887M820 732V747H832"/>
        <path class="break" d="M830 745c6 2 6 5 5 8s-3 3 0 5-2 6-4 7"/>

        <!-- left block -->
        <g>
          <path class="cyan" d="M99.500 664H180V874H99.500zM102 667H178V692M102 667V692M99.500 692H180M99.500 847H180M104 841V868H175V697H104V841M104 841H175"/>
          <path class="yellow" d="M99 692h8v11h-8zM172 692h8v11h-8zM99 835h8v12h-8zM172 835h8v12h-8z"/>
        </g>
        <path class="yelline" d="M129 617V694M127 767V846M52 773H102M129 872V922"/>

        <!-- right block -->
        <g class="cyan"><path d="M1411 664H1491V874H1411zM1413.500 667H1489V692M1413.500 667V692M1411 692H1491M1411 847H1491M1415.500 841V868H1486V697H1415.500V841M1415.500 841H1486"/></g>
        <path class="yellow" d="M1411 692h8v11h-8zM1483 692h8v11h-8zM1411 835h8v12h-8zM1483 835h8v12h-8z"/>

        <!-- axis bubbles -->
        <g class="bub">
          <circle cx="102" cy="152" r="9.500"/><circle cx="177.500" cy="152" r="9.500"/><circle cx="341" cy="152" r="9.500"/><circle cx="505" cy="152" r="9.500"/><circle cx="587" cy="152" r="9.500"/><circle cx="668.500" cy="152" r="9.500"/><circle cx="744" cy="152" r="9.500"/><circle cx="833" cy="152" r="9.500"/><circle cx="997" cy="152" r="9.500"/><circle cx="1160" cy="152" r="9.500"/><circle cx="1324.500" cy="152" r="9.500"/><circle cx="1413" cy="152" r="9.500"/><circle cx="1489" cy="152" r="9.500"/>
          <circle cx="102" cy="372" r="9.500"/><circle cx="177.500" cy="372" r="9.500"/><circle cx="341" cy="372" r="9.500"/><circle cx="505" cy="372" r="9.500"/><circle cx="668.500" cy="372" r="9.500"/><circle cx="833" cy="372" r="9.500"/><circle cx="997" cy="372" r="9.500"/><circle cx="1160" cy="372" r="9.500"/><circle cx="1324.500" cy="372" r="9.500"/><circle cx="1489" cy="372" r="9.500"/>
          <circle cx="102" cy="1001" r="9.500"/><circle cx="177.500" cy="1001" r="9.500"/><circle cx="341" cy="1001" r="9.500"/><circle cx="505" cy="1001" r="9.500"/><circle cx="587" cy="1001" r="9.500"/><circle cx="668.500" cy="1001" r="9.500"/><circle cx="744" cy="1001" r="9.500"/><circle cx="833" cy="1001" r="9.500"/><circle cx="997" cy="1001" r="9.500"/><circle cx="1160" cy="1001" r="9.500"/><circle cx="1324.500" cy="1001" r="9.500"/><circle cx="1413" cy="1001" r="9.500"/><circle cx="1489" cy="1001" r="9.500"/>
        </g>
        <g class="bubt">
          <text x="102" y="157">1</text><text x="177.500" y="157">2</text><text x="341" y="157">3</text><text x="505" y="157">4</text><text class="narrow" x="587" y="157">1/4</text><text x="668.500" y="157">5</text><text x="744" y="157">6</text><text x="833" y="157">7</text><text x="997" y="157">8</text><text x="1160" y="157">9</text><text class="narrow" x="1324.500" y="157">10</text><text class="narrow" x="1413" y="157">11</text><text class="narrow" x="1489" y="157">12</text>
          <text x="102" y="377">1</text><text x="177.500" y="377">2</text><text x="341" y="377">3</text><text x="505" y="377">4</text><text x="668.500" y="377">5</text><text x="833" y="377">7</text><text x="997" y="377">8</text><text x="1160" y="377">9</text><text class="narrow" x="1324.500" y="377">10</text><text class="narrow" x="1489" y="377">12</text>
          <text x="102" y="1006">1</text><text x="177.500" y="1006">2</text><text x="341" y="1006">3</text><text x="505" y="1006">4</text><text class="narrow" x="587" y="1006">1/4</text><text x="668.500" y="1006">5</text><text x="744" y="1006">6</text><text x="833" y="1006">7</text><text x="997" y="1006">8</text><text x="1160" y="1006">9</text><text class="narrow" x="1324.500" y="1006">10</text><text class="narrow" x="1413" y="1006">11</text><text class="narrow" x="1489" y="1006">12</text>
        </g>

        <!-- dimension text -->
        <g class="dimt">
          <text x="795" y="395">60900</text>
          <text x="140" y="412.500">3300</text><text x="259" y="412.500">7200</text><text x="422.500" y="412.500">7200</text><text x="587" y="412.500">7200</text><text x="751" y="412.500">7200</text><text x="914" y="412.500">7200</text><text x="1078.500" y="412.500">7200</text><text x="1242" y="412.500">7200</text><text x="1406" y="412.500">7200</text>
          <text x="706" y="431.500">3300</text><text x="788" y="431.500">3900</text><text x="1368" y="431.500">3900</text><text x="1450" y="431.500">3300</text>
          <text x="140" y="955.500">3300</text><text x="259" y="955.500">7200</text><text x="422.500" y="955.500">7200</text><text x="546" y="955.500">3600</text><text x="627.500" y="955.500">3600</text><text x="706" y="955.500">3300</text><text x="788" y="955.500">3900</text><text x="914" y="955.500">7200</text><text x="1078.500" y="955.500">7200</text><text x="1242" y="955.500">7200</text><text x="1368" y="955.500">3900</text><text x="1450" y="955.500">3300</text>
          <text x="795" y="973.500">60900</text>
          <text x="846" y="917">1200</text><text x="872.500" y="917">1190</text><text x="860" y="937">2390</text><text x="942" y="937">4810</text>
          <text transform="rotate(-90 956 724)" x="956" y="724">2650</text><text transform="rotate(-90 956 799)" x="956" y="799">3950</text>
        </g>

        <!-- titles and notes -->
        <g class="titles">
          <text class="ttl" x="642" y="184" textLength="108" lengthAdjust="spacingAndGlyphs">屋顶梁配筋平面图</text>
          <text class="ttl" x="642" y="1036" textLength="135" lengthAdjust="spacingAndGlyphs">机房屋顶梁配筋平面图</text>
          <text class="note" x="612" y="204" textLength="240" lengthAdjust="spacingAndGlyphs">1,主梁在次梁搁置处除标明的吊筋外,次梁两侧均须再附加各3个箍筋</text>
          <text class="note" x="623" y="218" textLength="217" lengthAdjust="spacingAndGlyphs">等高次梁相交处每梁侧均应附加3个箍筋,直径同梁基本箍直径</text>
          <text class="note" x="610" y="233" textLength="135" lengthAdjust="spacingAndGlyphs">2.本层梁梁顶标高以19.20m为基准</text>
          <text class="note" x="612" y="1057" textLength="240" lengthAdjust="spacingAndGlyphs">1,主梁在次梁搁置处除标明的吊筋外,次梁两侧均须再附加各3个箍筋</text>
          <text class="note" x="623" y="1071" textLength="217" lengthAdjust="spacingAndGlyphs">等高次梁相交处每梁侧均应附加3个箍筋,直径同梁基本箍直径</text>
        </g>
        <path class="uline" d="M615 190.500H804M615 1043H804"/>

        <!-- rebar labels -->
        <g class="m">
          <text x="697" y="690" textLength="13">2Φ22</text><text x="747" y="690" textLength="12">2Φ22</text><text x="804" y="690" textLength="25">6Φ22 4/2</text><text x="855" y="690" textLength="24">6Φ22 4/2</text>
          <text x="763" y="651" textLength="24">WKL2(2A)</text><text x="763" y="658" textLength="14">250x500</text><text x="762" y="665" textLength="40">Φ8-100/200(2)</text><text x="763" y="672" textLength="13">2Φ21</text><text x="763" y="680" textLength="37">梁顶标高 23.20m</text>
          <text x="777" y="704" textLength="13">2Φ22</text><text x="772" y="714" textLength="21">WKL3(1A)</text><text x="772" y="721" textLength="20">250x500</text><text x="772" y="728" textLength="27">Φ8-200(2)</text><text x="772" y="734" textLength="13">2Φ22</text><text x="772" y="741" textLength="38">梁顶标高 23.20m</text>
          <text x="748" y="750" textLength="13">2Φ22</text><text x="801" y="750" textLength="13">4Φ22</text><text x="855" y="750" textLength="13">4Φ22</text>
          <text x="699" y="703" textLength="11">3Φ18</text><text x="694" y="710" textLength="22">250x400</text><text x="694" y="717" textLength="27">Φ8-100(2)</text><text x="694" y="724" textLength="16">2Φ14</text>
          <text x="857" y="704" textLength="13">2Φ22</text><text x="853" y="711" textLength="28">Φ8-100(2)</text>
          <text x="855" y="764" textLength="13">2Φ16</text><text x="853" y="771" textLength="28">Φ8-100(2)</text><text x="792" y="765" textLength="12">2Φ18</text>
          <text x="698" y="838" textLength="24">WKL2(2A)</text><text x="693" y="883" textLength="16">WL1(1)</text>
          <text transform="rotate(-90 820 743)" x="820" y="743" textLength="14">2Φ16</text>
          <text transform="rotate(-90 827 720)" x="827" y="720" textLength="13">4Φ18</text>
          <text transform="rotate(-90 842 775)" x="842" y="775" textLength="13">4Φ23</text>
          <text transform="rotate(-90 740 718)" x="740" y="718" textLength="13">2Φ18</text>
          <text transform="rotate(-90 754 774)" x="754" y="774" textLength="13">3Φ18</text>
          <text transform="rotate(-90 740 836)" x="740" y="836" textLength="13">4Φ18</text>
          <text transform="rotate(-90 740 864)" x="740" y="864" textLength="13">4Φ18</text>
          <text transform="rotate(-90 829 834)" x="829" y="834" textLength="13">4Φ18</text>
          <text transform="rotate(-90 754 864)" x="754" y="864" textLength="13">2Φ18</text>
          <text transform="rotate(-90 761 874)" x="761" y="874" textLength="26">Φ8-100(2)</text>
          <text transform="rotate(-90 664 770)" x="664" y="770" textLength="24">WKL2(1A)</text>
          <text transform="rotate(-90 694 811)" x="694" y="811" textLength="23">WKL4(1A)</text><text transform="rotate(-90 701 811)" x="701" y="811" textLength="22">250x500</text><text transform="rotate(-90 707 811)" x="707" y="811" textLength="38">Φ8-100/200(2)</text><text transform="rotate(-90 715 811)" x="715" y="811" textLength="13">3Φ16</text><text transform="rotate(-90 723 811)" x="723" y="811" textLength="37">梁顶标高 23.20m</text>
          <text transform="rotate(-90 777 811)" x="777" y="811" textLength="23">WKL5(1)</text><text transform="rotate(-90 784 811)" x="784" y="811" textLength="22">250x500</text><text transform="rotate(-90 790 811)" x="790" y="811" textLength="38">Φ8-100/200(2)</text><text transform="rotate(-90 797 811)" x="797" y="811" textLength="17">2Φ22</text><text transform="rotate(-90 813 811)" x="813" y="811" textLength="37">梁顶标高 23.20m</text>
          <text transform="rotate(-90 849 820)" x="849" y="820" textLength="19">WL1(1)</text><text transform="rotate(-90 858 820)" x="858" y="820" textLength="22">250x400</text><text transform="rotate(-90 865 820)" x="865" y="820" textLength="28">Φ8-100(2)</text><text transform="rotate(-90 872 820)" x="872" y="820" textLength="24">2Φ16,2Φ16</text><text transform="rotate(-90 879 820)" x="879" y="820" textLength="37">梁顶标高 23.20m</text>

          <text x="131" y="624" textLength="23">WKL1a(1)</text><text x="131" y="631" textLength="21">250x400</text><text x="131" y="637" textLength="27">Φ8-100(2)</text><text x="131" y="644" textLength="28">3Φ18;3Φ18</text><text x="131" y="651" textLength="16">2Φ14</text><text x="131" y="659" textLength="37">梁顶标高 23.20m</text>
          <text x="129" y="775" textLength="20">WKL1(1)</text><text x="129" y="781" textLength="21">250x400</text><text x="129" y="788" textLength="39">Φ8-100/200(2)</text><text x="129" y="795" textLength="26">2Φ18, 2Φ18</text><text x="129" y="803" textLength="37">梁顶标高 23.20m</text>
          <text x="131" y="893" textLength="16">WL1(1)</text><text x="131" y="900" textLength="21">250x400</text><text x="131" y="906" textLength="27">Φ8-200(2)</text><text x="131" y="914" textLength="26">2Φ14,2Φ16</text><text x="131" y="922" textLength="37">梁顶标高 23.20m</text>
          <text transform="rotate(-90 58 772)" x="58" y="772" textLength="24">WKL2(1A)</text><text transform="rotate(-90 65 772)" x="65" y="772" textLength="22">250x400</text><text transform="rotate(-90 71 772)" x="71" y="772" textLength="39">Φ8-100/200(2)</text><text transform="rotate(-90 79 772)" x="79" y="772" textLength="12">3Φ18</text><text transform="rotate(-90 87 772)" x="87" y="772" textLength="37">梁顶标高 23.20m</text>
          <text transform="rotate(-90 97 713)" x="97" y="713" textLength="12">3Φ18</text><text transform="rotate(-90 111 773)" x="111" y="773" textLength="12">2Φ18</text><text transform="rotate(-90 97 836)" x="97" y="836" textLength="12">2Φ18</text><text transform="rotate(-90 97 863)" x="97" y="863" textLength="12">3Φ18</text><text transform="rotate(-90 111 863)" x="111" y="863" textLength="12">2Φ18</text><text transform="rotate(-90 117 866)" x="117" y="866" textLength="27">Φ8-100(2)</text>
          <text transform="rotate(-90 186 772)" x="186" y="772" textLength="24">WKL2(1A)</text>

          <text x="1443" y="706" textLength="22">WKL1a(1)</text><text x="1443" y="837" textLength="19">WKL1(1)</text><text x="1446" y="882" textLength="16">WL1(1)</text>
          <text transform="rotate(-90 1409 772)" x="1409" y="772" textLength="24">WKL2(1A)</text>
        </g>

        <!-- UCS icon -->
        <path class="ucs" d="M60 1225V1274H109M56 1269h9v9h-9z"/>
        <text class="ucst" x="67" y="1221">Y</text><text class="ucst" x="119" y="1272">X</text>

        <!-- site watermark -->
        <g class="wm">
          <text transform="translate(156 256) rotate(-45)">知末网 www.znzmo.com</text>
          <text transform="translate(715 256) rotate(-45)">知末网 www.znzmo.com</text>
          <text transform="translate(1267 256) rotate(-45)">知末网 www.znzmo.com</text>
          <text transform="translate(22 610) rotate(-45)">知末网 www.znzmo.com</text>
          <text transform="translate(568 610) rotate(-45)">知末网 www.znzmo.com</text>
          <text transform="translate(1108 610) rotate(-45)">知末网 www.znzmo.com</text>
          <text transform="translate(1660 610) rotate(-45)">知末网 www.znzmo.com</text>
          <text transform="translate(413 970) rotate(-45)">知末网 www.znzmo.com</text>
          <text transform="translate(963 970) rotate(-45)">知末网 www.znzmo.com</text>
          <text transform="translate(1511 970) rotate(-45)">知末网 www.znzmo.com</text>
        </g>
      </svg>

      <div class="viewcube">
        <div class="ring"></div>
        <div class="cubeface"><span class="cubeinner">上</span></div>
        <span class="dir n">北</span><span class="dir w2">西</span><span class="dir e">东</span><span class="dir s">南</span>
      </div>
      <div class="unnamed">未命名<span class="tri"></span></div>

      <div class="cmdhist">
        <div><span>命令: _textedit</span></div>
        <div><span>当前设置: 编辑模式 = Multiple</span></div>
        <div><span>选择注释对象或 [放弃(U)/模式(M)]: *取消*</span></div>
      </div>
      <div class="cmdbar">
        <div class="cmdtools"><span class="hgrip"></span><span class="cmdx">✕</span><svg class="ic w16"><use href="#wrench"/></svg></div>
        <div class="cmdinput"><svg class="ic w16"><use href="#st-term"/></svg><span class="caret dark"></span><span class="placeholder">键入命令</span><span class="uptri"></span></div>
      </div>
    </section>

    <aside class="side right">
      <div class="vbar">
        <span class="vgrip"></span>
        <svg class="ic v"><use href="#m-er"/></svg><svg class="ic v"><use href="#m-co"/></svg><svg class="ic v"><use href="#m-mi"/></svg><svg class="ic v"><use href="#m-of"/></svg><svg class="ic v"><use href="#m-ar"/></svg><svg class="ic v"><use href="#m-mv"/></svg><svg class="ic v"><use href="#m-ro"/></svg><svg class="ic v"><use href="#m-sc"/></svg><svg class="ic v"><use href="#m-st"/></svg><svg class="ic v"><use href="#m-tr"/></svg><svg class="ic v"><use href="#m-ex"/></svg><svg class="ic v"><use href="#m-br"/></svg><svg class="ic v"><use href="#m-bk"/></svg><svg class="ic v"><use href="#m-jo"/></svg><svg class="ic v"><use href="#m-ch"/></svg><svg class="ic v"><use href="#m-fi"/></svg><svg class="ic v"><use href="#m-bl"/></svg><svg class="ic v"><use href="#m-xp"/></svg>
      </div>
    </aside>
  </main>

  <footer class="statusbar">
    <div class="layouts">
      <span class="ltab on">模型</span><span class="ltab">布局1</span><span class="ltab plus">+</span>
    </div>
    <div class="stp coords">-9359214.828, 4226317.891, 0.000</div>
    <div class="stp mdl">模型</div>
    <div class="stp gridp"><svg class="si"><use href="#st-grid"/></svg><svg class="si"><use href="#st-snap"/></svg><span class="caret st"></span></div>
    <div class="stp">
      <svg class="si"><use href="#st-inf"/></svg><svg class="si on"><use href="#st-dyn"/></svg><svg class="si on"><use href="#st-ortho"/></svg><svg class="si"><use href="#st-pol"/></svg><span class="caret st"></span><svg class="si"><use href="#st-iso"/></svg><span class="caret st"></span>
      <svg class="si"><use href="#st-os"/></svg><svg class="si on"><use href="#st-otrack"/></svg><span class="caret st"></span><svg class="si"><use href="#st-lw"/></svg><svg class="si on"><use href="#st-tp"/></svg><svg class="si"><use href="#st-qp"/></svg><svg class="si"><use href="#st-3d"/></svg><span class="caret st"></span>
    </div>
    <div class="stp"><svg class="si on"><use href="#st-ucs"/></svg><svg class="si"><use href="#st-cube"/></svg><span class="caret st"></span><svg class="si on"><use href="#st-gizmo"/></svg><span class="caret st"></span></div>
    <div class="stp"><svg class="si on"><use href="#st-ann"/></svg><svg class="si"><use href="#st-ann"/></svg><svg class="si"><use href="#st-ann2"/></svg><span class="scale">1:1 / 100%</span><span class="caret st"></span></div>
    <div class="stp"><span class="gear">⚙</span><span class="caret st"></span><svg class="si"><use href="#st-plus"/></svg></div>
    <div class="stp"><svg class="si"><use href="#st-ruler"/></svg><span class="units">小数</span><span class="caret st"></span></div>
    <div class="stp"><svg class="si"><use href="#st-qview"/></svg></div>
    <div class="stp"><svg class="si"><use href="#st-ui"/></svg><span class="caret st"></span></div>
    <div class="stp plain"><svg class="si"><use href="#st-iso2"/></svg><svg class="si on"><use href="#st-hw"/></svg><svg class="si"><use href="#st-cl"/></svg></div>
    <div class="stp"><svg class="si"><use href="#st-full"/></svg></div>
    <svg class="si"><use href="#st-menu"/></svg>
  </footer>

  <div class="brand">知末</div>
  <div class="brandid">ID: 1178195607</div>
</div>
</body>
</html>
```
FILE: styles.css
```css
* { box-sizing: border-box; }
html, body { margin: 0; padding: 0; background: #000; }
body { font-family: "Liberation Sans", "Noto Sans CJK SC", sans-serif; }
.sprite { position: absolute; width: 0; height: 0; }

/* sprite paint classes */
.w { fill: #e3e6ea; }
.g1 { fill: #a3a9b1; }
.g2 { fill: #6b727d; }
.g3 { fill: #c9ccd1; }
.dk { fill: #2d3440; }
.bl { fill: #62b2ee; }
.bl2 { fill: #3a82c0; }
.o { fill: #f1ad3c; }
.o2 { fill: #f3cf7e; }
.rd { fill: #e5565a; }
.gn { fill: #6fd07e; }
.lg { fill: #cf2a2e; fill-rule: evenodd; }
.l { fill: none; stroke: #e3e6ea; stroke-width: 1.4; }
.l2 { fill: none; stroke: #e3e6ea; stroke-width: 2; }
.l3 { fill: none; stroke: #555; stroke-width: 1.4; }
.lb { fill: none; stroke: #62b2ee; stroke-width: 1.6; }
.lo { fill: none; stroke: #f1ad3c; stroke-width: 1.6; }
.lo2 { fill: none; stroke: #f1ad3c; stroke-width: 2; }
.o3 { fill: none; stroke: #e8c27a; stroke-width: 2; }
.ol { fill: none; stroke: #e39a5b; stroke-width: 1.3; }
.rd2 { fill: none; stroke: #e5565a; stroke-width: 1.5; }
.dkl { fill: none; stroke: #2d3440; stroke-width: 1.5; }
.dkl2 { fill: none; stroke: #2d3440; stroke-width: 2.2; }
.gk { fill: none; stroke: #5fcf6a; stroke-width: 2; }
.gk2 { fill: none; stroke: #5fcf6a; stroke-width: 1.6; }
.dash { stroke-dasharray: 3 2; }
.dots { fill: none; stroke: #e3e6ea; stroke-width: 2; }
.cmdk { fill: none; stroke: #333; stroke-width: 1.3; }
.tick { fill: #00e000; stroke: #00e000; stroke-width: 1; }

/* shell */
.app {
  position: relative;
  width: 1600px;
  height: 1334px;
  display: flex;
  flex-direction: column;
  background: #222933;
  border: 2px solid #0c8fd6;
  overflow: hidden;
  color: #d3d7dc;
  font-size: 12px;
}

.ic { width: 18px; height: 18px; flex: none; margin: 0 2.250px; }
.ic2 { width: 16px; height: 16px; flex: none; }
.logo { width: 15px; height: 16px; margin-left: 7px; flex: none; }

.caret {
  width: 0; height: 0; flex: none;
  margin: 0 5px;
  border-left: 3.500px solid transparent;
  border-right: 3.500px solid transparent;
  border-top: 4px solid #c5c9ce;
}
.caret.slim { margin: 0 5px; border-left-width: 2.500px; border-right-width: 2.500px; border-top-width: 3px; }
.caret.mini { margin: 0 3px; border-left-width: 3px; border-right-width: 3px; border-top-color: #bfc4cb; }
.caret.bar { box-shadow: 0 -3px 0 -1px #c5c9ce; }
.caret.st { margin: 0 4.500px; }
.caret.dark { border-top-color: #444; margin: 0 3px 0 2px; }

/* title bar */
.titlebar { height: 26px; display: flex; align-items: center; flex: none; }
.qat { display: flex; align-items: center; margin-left: 9px; }
.qat .ic { margin: 0 2.500px; }
.share { color: #9db3c8; font-size: 12px; margin-left: 2px; }
.doctitle { margin-left: 179px; display: flex; gap: 15px; color: #dfe2e6; white-space: nowrap; align-items: center; }
.dtapp { font-size: 12.500px; }
.dtfile { font-size: 12px; }
.tright { margin-left: auto; display: flex; align-items: center; gap: 0; width: 561px; }
.rarrow { width: 0; height: 0; border-top: 4px solid transparent; border-bottom: 4px solid transparent; border-left: 4px solid #d0d0d0; margin-right: 6px; }
.search { width: 174px; height: 19px; background: #4a5362; color: #9aa2ad; font-size: 11px; font-style: italic; line-height: 19px; padding-left: 3px; }
.tright .ic2 { margin-left: 5px; }
.uname { font-size: 12px; margin-left: 6px; color: #d8dbdf; white-space: nowrap; }
.tright .cart { margin-left: 8px; }
.tdiv { width: 1px; height: 18px; background: #59616e; margin: 0 6px 0 4px; }
.winbtns { margin-left: auto; display: flex; align-items: center; gap: 12px; padding-right: 6px; color: #e4e6ea; }
.wmin { width: 8px; height: 2px; background: #d5d8dc; align-self: flex-end; margin-bottom: 3px; }
.wmax { width: 13px; height: 13px; border: 2px solid #d5d8dc; }
.wrest { width: 12px; height: 11px; border: 1px solid #d5d8dc; box-shadow: 2px -2px 0 -1px #222933, 3px -3px 0 -1px #d5d8dc; }
.wclose { font-size: 14px; line-height: 14px; }

/* menu */
.menubar { height: 20px; display: flex; align-items: center; gap: 22.400px; padding-left: 15px; color: #c2c7cd; font-size: 12px; flex: none; border-bottom: 1px solid #39414e; }
.subwin { margin-left: auto; display: flex; align-items: center; gap: 7px; padding-right: 5px; }

/* document tabs */
.tabbar { height: 24px; display: flex; align-items: flex-end; padding-left: 21px; flex: none; }
.tab { width: 120px; height: 22px; background: #2e3541; color: #9aa1aa; line-height: 23px; padding-left: 12px; border-radius: 6px 6px 0 0; }
.tab.active { width: 202px; margin-left: 2px; background: #3b4453; color: #f0f2f4; font-weight: 700; font-size: 12px; padding-left: 10px; white-space: nowrap; }
.tabx { font-weight: 400; color: #b5bac1; margin-left: 8px; }
.tabadd { width: 23px; height: 22px; background: #2e3541; color: #b5bac1; text-align: center; font-size: 16px; line-height: 22px; border-radius: 0 6px 0 0; }

/* toolbars */
.toolrows { height: 56px; background: #3b4453; padding-top: 3px; flex: none; }
.toolrow { height: 25px; display: flex; align-items: center; padding-left: 2px; }
.toolrow + .toolrow { margin-top: 1px; }
.panel { height: 23px; display: flex; align-items: center; background: #38404e; border: 1px solid #2b323e; }
.p1 { width: 630px; }
.p2 { width: 27px; margin-left: 1px; justify-content: center; }
.p3 { width: 60px; margin-left: 2px; }
.q1 { width: 76px; }
.q2 { width: 625px; margin-left: 1px; }
.q3 { width: 474px; margin-left: 2px; }
.grip { width: 3px; height: 15px; flex: none; margin: 0 3px 0 1px; background: repeating-linear-gradient(#aeb3ba 0 1px, transparent 1px 2px); }
.grip.g2 { margin: 0 2px 0 9px; }
.sep { width: 5.500px; height: 18px; flex: none; position: relative; }
.sep::before { content: ""; position: absolute; left: 2px; top: 0; width: 1.500px; height: 18px; background: #c8ccd2; }

.combo { height: 21px; display: flex; align-items: center; background: #fff; color: #222; font-size: 12px; position: relative; flex: none; }
.chev { position: absolute; right: 7px; top: 6px; width: 6px; height: 6px; border-right: 1px solid #888; border-bottom: 1px solid #888; transform: rotate(45deg); }
.layerbox { width: 292px; margin-left: 3px; padding-left: 4px; }
.lic { width: 17px; height: 17px; margin-right: 1px; flex: none; }
.swatch { width: 13px; height: 14px; background: #00ffff; border: 1px solid #111; flex: none; margin-right: 5px; }
.layerbox .swatch { margin-left: 2px; }
.colorbox { width: 146px; padding-left: 2px; }
.linebox { width: 155px; margin-left: 6px; padding-left: 5px; }
.weightbox { width: 121px; margin-left: 6px; padding-left: 5px; }
.plotbox { width: 116px; margin-left: 6px; padding-left: 11px; }
.ln { width: 58px; height: 2px; background: #555; margin-right: 6px; flex: none; }
.ln.short { width: 34px; margin-right: 5px; }
.lname.dim { color: #aaa; }
.axisbox { width: 117px; height: 21px; padding-left: 18px; margin-right: 1px; }
.toolrow .lname { white-space: nowrap; }

/* workspace */
.workspace { flex: 1; display: flex; min-height: 0; }
.side { background: #3b4453; flex: none; padding-top: 2px; }
.side.left { width: 30px; padding-left: 2px; }
.side.right { width: 33px; padding-left: 4px; }
.vbar { width: 24px; display: flex; flex-direction: column; align-items: center; border: 1px solid #2e3541; padding-bottom: 2px; }
.side.left .vbar { width: 23px; }
.vgrip { width: 14px; height: 3px; margin: 2px 0 4px; background: repeating-linear-gradient(90deg, #aeb3ba 0 1px, transparent 1px 2px); flex: none; }
.ic.v { margin: 0 0 3.400px; }
.vtext { height: 21.400px; line-height: 21px; font-size: 19px; color: #e3e6ea; text-align: center; flex: none; font-family: "Liberation Sans", sans-serif; }

/* canvas */
.canvas { width: 1533px; position: relative; background: #000; flex: none; overflow: hidden; }
.drawing { display: block; }
.thickred { fill: none; stroke: #a00000; stroke-width: 3; }
.thinwhite { fill: none; stroke: #e0e0e0; stroke-width: 1.600; }
.red { fill: none; stroke: #d00000; stroke-width: 1.200; }
.redb { fill: none; stroke: #d00000; stroke-width: 1.800; }
.green { fill: none; stroke: #00e000; stroke-width: 1.200; }
.greenb { fill: none; stroke: #00e000; stroke-width: 1.500; }
.dim { fill: none; stroke: #00e000; stroke-width: 1; marker-start: url(#tk); marker-mid: url(#tk); marker-end: url(#tk); }
.cyan { fill: none; stroke: #00c8c8; stroke-width: 1.600; }
.yellow { fill: none; stroke: #b8b000; stroke-width: 1.600; }
.yelline { fill: none; stroke: #b8b000; stroke-width: 1.600; }
.break { fill: none; stroke: #f0f000; stroke-width: 2; }
.uline { fill: none; stroke: #00e6e6; stroke-width: 2; }
.bub circle { fill: none; stroke: #00c800; stroke-width: 1.600; }
.bubt text { fill: #eee; font-family: "DejaVu Sans", sans-serif; font-size: 13px; text-anchor: middle; }
.bubt .narrow { font-family: "Liberation Sans", sans-serif; font-size: 12px; letter-spacing: -1px; }
.dimt text { fill: #dcdcdc; font-family: "Liberation Sans", sans-serif; font-size: 10px; text-anchor: middle; }
.ttl { fill: #f000f0; font-family: "Noto Sans CJK SC", sans-serif; font-size: 18px; font-weight: 700; }
.note { fill: #e800e8; font-family: "Noto Sans CJK SC", sans-serif; font-size: 11px; }
.m text { fill: #f000f0; font-family: "Liberation Sans", "Noto Sans CJK SC", sans-serif; font-size: 7.200px; font-weight: 700; }
.ucs { fill: none; stroke: #e6e6e6; stroke-width: 1.200; }
.ucst { fill: #e6e6e6; font-family: "Liberation Sans", sans-serif; font-size: 17px; text-anchor: middle; font-weight: 400; }
.wm text { fill: rgba(255,255,255,.04); stroke: rgba(255,255,255,.15); stroke-width: 1.500; font-family: "Liberation Sans", "Noto Sans CJK SC", sans-serif; font-weight: 700; font-size: 34px; text-anchor: middle; }

/* view cube */
.viewcube { position: absolute; left: 1390px; top: 19px; width: 124px; height: 124px; }
.ring { position: absolute; left: 4px; top: 4px; width: 116px; height: 116px; border: 12px solid #2c2c2c; border-radius: 50%; }
.cubeface { position: absolute; left: 37px; top: 37px; width: 50px; height: 50px; background: #a9a9a9; border: 1px solid #777; display: flex; align-items: center; justify-content: center; }
.cubeinner { width: 32px; height: 32px; background: #999; color: #6e6e6e; font-size: 30px; line-height: 30px; text-align: center; }
.dir { position: absolute; color: #919191; font-size: 18px; line-height: 18px; }
.dir.n { left: 53px; top: 1px; }
.dir.s { left: 53px; top: 109px; }
.dir.w2 { left: -2px; top: 54px; }
.dir.e { left: 107px; top: 54px; }
.unnamed { position: absolute; left: 1425px; top: 166px; width: 55px; height: 16px; background: rgba(105,105,105,.9); border-radius: 4px; color: #939393; font-size: 10.500px; line-height: 16px; padding-left: 3px; }
.tri { position: absolute; right: 5px; top: 6px; width: 0; height: 0; border-left: 4px solid transparent; border-right: 4px solid transparent; border-top: 4px solid #939393; }

/* command line */
.cmdhist { position: absolute; left: 298px; top: 1090px; font-family: "DejaVu Sans Mono", "Noto Sans CJK SC", monospace; font-size: 12px; color: #c4c4c4; }
.cmdhist div { height: 19.500px; }
.cmdhist span { background: rgba(85,85,85,.85); padding: 1px 1px; border-radius: 2px; white-space: pre; }
.cmdbar { position: absolute; left: 237px; top: 1149px; width: 1060px; height: 24px; display: flex; }
.cmdtools { width: 55px; height: 24px; background: #222933; display: flex; align-items: center; border-radius: 3px 0 0 0; }
.hgrip { width: 4px; height: 16px; margin-left: 2px; background: repeating-linear-gradient(#aeb3ba 0 1px, transparent 1px 2px); }
.cmdx { color: #b9bdc3; font-size: 12px; margin-left: 8px; }
.ic.w16 { width: 16px; height: 16px; margin: 0 3px 0 7px; }
.cmdinput .ic.w16 { margin: 0 3px; }
.cmdinput { flex: 1; height: 24px; background: #b0b0b0; display: flex; align-items: center; position: relative; padding-left: 0; border-radius: 2px 2px 0 0; }
.placeholder { color: #6c6c6c; font-style: italic; font-size: 12px; margin-left: 2px; }
.uptri { position: absolute; right: 4px; top: 10px; width: 0; height: 0; border-left: 4px solid transparent; border-right: 4px solid transparent; border-bottom: 4px solid #444; }

/* status bar */
.statusbar { height: 30px; flex: none; display: flex; align-items: flex-start; padding-top: 2px; gap: 1px; background: #222933; }
.layouts { width: 358px; display: flex; height: 20px; padding-left: 14px; flex: none; }
.ltab { height: 17px; padding: 0 5px; background: #333b48; color: #bcc1c7; font-size: 12px; line-height: 16px; border-radius: 0 0 5px 5px; margin-right: 6px; }
.ltab.on { background: #3b4453; color: #fff; font-weight: 700; padding: 0 9px; }
.ltab.plus { padding: 0 4px; margin-left: 6px; font-size: 15px; }
.stp { height: 24px; display: flex; align-items: center; background: #3b4453; flex: none; }
.stp.plain { background: transparent; }
.coords { width: 204px; justify-content: flex-end; padding-right: 4px; color: #d8dbdf; font-size: 11.600px; white-space: nowrap; }
.mdl { width: 29px; margin-left: 2px; justify-content: center; color: #e6e8ea; font-size: 12px; }
.gridp { margin-left: 2px; }
.si { width: 22px; height: 22px; padding: 3px; flex: none; margin: 0 1px; }
.si.on { background: #4f86c0; }
.scale { color: #d8dbdf; font-size: 12px; margin-left: 3px; white-space: nowrap; }
.gear { width: 24px; color: #dfe2e6; font-size: 18px; text-align: center; }
.units { width: 56px; padding-left: 5px; color: #d8dbdf; font-size: 12px; }

/* overlay branding */
.brand { position: absolute; left: 1404px; top: 1194px; color: rgba(222,222,222,.88); font-family: "Noto Sans CJK SC", sans-serif; font-size: 62px; line-height: 70px; letter-spacing: 1px; }
.brandid { position: absolute; left: 1358px; top: 1275px; color: #fff; font-family: "Liberation Sans", sans-serif; font-size: 32px; line-height: 36px; letter-spacing: .2px; white-space: nowrap; -webkit-text-stroke: .5px #fff; }
```
